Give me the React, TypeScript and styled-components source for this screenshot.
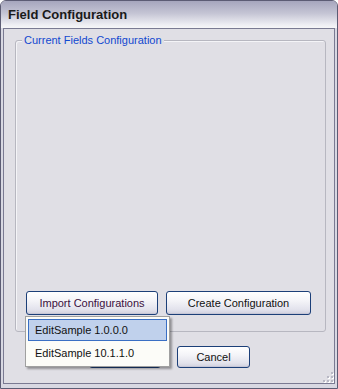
import React from 'react'
import styled, { createGlobalStyle } from 'styled-components'

const Global = createGlobalStyle`
  html, body {
    margin: 0;
    padding: 0;
    background: #ffffff;
  }
  * {
    box-sizing: border-box;
  }
`

export default function App() {
  return (
    <>
      <Global />
      <Window>
        <TitleBar>Field Configuration</TitleBar>
        <Client>
          <Group>
            <Legend>Current Fields Configuration</Legend>
            <ButtonRow>
              <MenuAnchor>
                <Button $w={132} $h={24} $color="#3a1040">Import Configurations</Button>
                <Menu>
                  <MenuItem $active>EditSample 1.0.0.0</MenuItem>
                  <MenuItem>EditSample 10.1.1.0</MenuItem>
                </Menu>
              </MenuAnchor>
              <Button $w={145} $h={24}>Create Configuration</Button>
            </ButtonRow>
          </Group>
          <Footer>
            <Button $w={72} $h={22}>OK</Button>
            <Button $w={73} $h={22}>Cancel</Button>
          </Footer>
          <Grip>
            <svg width="11" height="11" viewBox="0 0 11 11">
              {[
                [9, 1], [9, 5], [5, 5], [9, 9], [5, 9], [1, 9],
              ].map(([x, y]) => (
                <g key={`${x}-${y}`}>
                  <rect x={x} y={y} width="2" height="2" fill="#ffffff" />
                  <rect x={x - 1} y={y - 1} width="2" height="2" fill="#b8b8c4" />
                </g>
              ))}
            </svg>
          </Grip>
        </Client>
      </Window>
    </>
  )
}

const Window = styled.div`
  width: 338px;
  height: 389px;
  display: flex;
  flex-direction: column;
  border: 1px solid #5c5c74;
  border-radius: 6px 6px 0 0;
  background: #d8d8e2;
  overflow: hidden;
  font-family: "Liberation Sans", Arial, sans-serif;
`

const TitleBar = styled.div`
  height: 27px;
  flex-shrink: 0;
  padding: 6px 0 0 7px;
  font-size: 13px;
  font-weight: bold;
  color: #1a1a1a;
  background: linear-gradient(to bottom, #a6a6bd 0%, #c4c4d4 45%, #eeeef3 88%, #f6f6f8 100%);
`

const Client = styled.div`
  position: relative;
  flex: 1;
  margin: 0 2px 4px 2px;
  border: 1px solid #7a7a92;
  background: #e0dfe5;
  display: flex;
  flex-direction: column;
  padding: 11px 8px 0 11px;
`

const Group = styled.div`
  height: 292px;
  flex-shrink: 0;
  border: 1px solid #b7b7c0;
  border-radius: 3px;
  padding: 0 10px 16px 10px;
  display: flex;
  flex-direction: column;
  justify-content: space-between;
  box-shadow: 1px 1px 0 #f4f4f7 inset;
`

const Legend = styled.div`
  align-self: flex-start;
  margin: -7px 0 0 -4px;
  padding: 0 2px;
  background: #e0dfe5;
  font-size: 11px;
  line-height: 13px;
  color: #1248d0;
`

const ButtonRow = styled.div`
  display: flex;
  gap: 8px;
`

const MenuAnchor = styled.div`
  position: relative;
`

const Button = styled.button<{ $w: number; $h: number; $color?: string }>`
  width: ${p => p.$w}px;
  height: ${p => p.$h}px;
  padding: 0;
  border: 1px solid #1c3f78;
  border-radius: 3px;
  background: linear-gradient(to bottom, #ffffff 0%, #f4f4f8 40%, #e2e2ec 80%, #d0d0de 100%);
  box-shadow: inset 0 -1px 0 #c6c6d6;
  font-family: "Liberation Sans", Arial, sans-serif;
  font-size: 11px;
  color: ${p => p.$color || '#111111'};
  cursor: default;
`

const Menu = styled.div`
  position: absolute;
  top: 25px;
  left: -1px;
  width: 145px;
  padding: 2px;
  background: #fcfcf8;
  border: 1px solid #a0a0a0;
  box-shadow: 2px 2px 2px rgba(0, 0, 0, 0.35);
  display: flex;
  flex-direction: column;
  gap: 1px;
  z-index: 2;
`

const MenuItem = styled.div<{ $active?: boolean }>`
  height: 22px;
  padding: 0 0 0 6px;
  display: flex;
  align-items: center;
  font-size: 11px;
  color: #111111;
  border: 1px solid ${p => (p.$active ? '#3a6fc4' : 'transparent')};
  background: ${p => (p.$active ? '#c0d1ec' : 'transparent')};
`

const Footer = styled.div`
  display: flex;
  justify-content: center;
  gap: 16px;
  margin: 14px 0 0 -2px;
`

const Grip = styled.div`
  position: absolute;
  right: 0;
  bottom: 0;
  width: 11px;
  height: 11px;
  line-height: 0;
`
